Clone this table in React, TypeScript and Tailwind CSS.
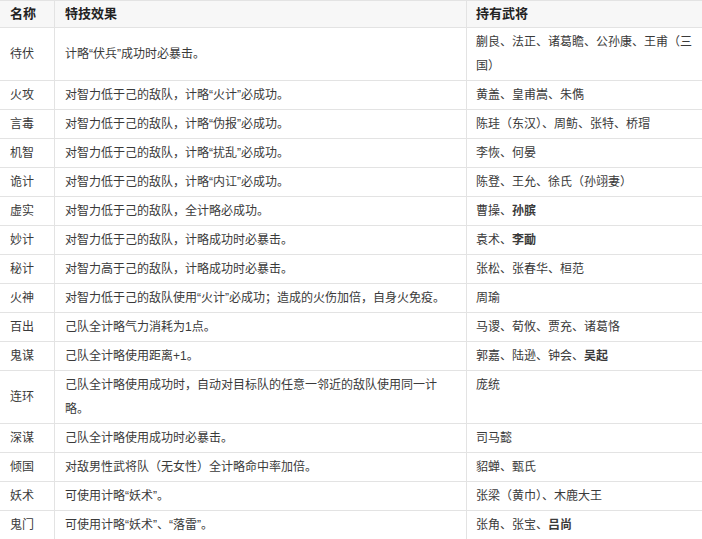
type Row = {
  name: string;
  effect: string;
  holders: React.ReactNode;
};

const B = ({ children }: { children: React.ReactNode }) => (
  <span className="font-bold">{children}</span>
);

const rows: Row[] = [
  { name: "待伏", effect: "计略“伏兵”成功时必暴击。", holders: "蒯良、法正、诸葛瞻、公孙康、王甫（三国）" },
  { name: "火攻", effect: "对智力低于己的敌队，计略“火计”必成功。", holders: "黄盖、皇甫嵩、朱儁" },
  { name: "言毒", effect: "对智力低于己的敌队，计略“伪报”必成功。", holders: "陈珪（东汉）、周鲂、张特、桥瑁" },
  { name: "机智", effect: "对智力低于己的敌队，计略“扰乱”必成功。", holders: "李恢、何晏" },
  { name: "诡计", effect: "对智力低于己的敌队，计略“内讧”必成功。", holders: "陈登、王允、徐氏（孙翊妻）" },
  {
    name: "虚实",
    effect: "对智力低于己的敌队，全计略必成功。",
    holders: (
      <>
        曹操、<B>孙膑</B>
      </>
    ),
  },
  {
    name: "妙计",
    effect: "对智力低于己的敌队，计略成功时必暴击。",
    holders: (
      <>
        袁术、<B>李勔</B>
      </>
    ),
  },
  { name: "秘计", effect: "对智力高于己的敌队，计略成功时必暴击。", holders: "张松、张春华、桓范" },
  { name: "火神", effect: "对智力低于己的敌队使用“火计”必成功；造成的火伤加倍，自身火免疫。", holders: "周瑜" },
  { name: "百出", effect: "己队全计略气力消耗为1点。", holders: "马谡、荀攸、贾充、诸葛恪" },
  {
    name: "鬼谋",
    effect: "己队全计略使用距离+1。",
    holders: (
      <>
        郭嘉、陆逊、钟会、<B>吴起</B>
      </>
    ),
  },
  { name: "连环", effect: "己队全计略使用成功时，自动对目标队的任意一邻近的敌队使用同一计略。", holders: "庞统" },
  { name: "深谋", effect: "己队全计略使用成功时必暴击。", holders: "司马懿" },
  { name: "倾国", effect: "对敌男性武将队（无女性）全计略命中率加倍。", holders: "貂蝉、甄氏" },
  { name: "妖术", effect: "可使用计略“妖术”。", holders: "张梁（黄巾）、木鹿大王" },
  {
    name: "鬼门",
    effect: "可使用计略“妖术”、“落雷”。",
    holders: (
      <>
        张角、张宝、<B>吕尚</B>
      </>
    ),
  },
];

const cell = "border-b border-[#e3e3e3] pt-[2px] pb-[2px] leading-[24px]";

export default function App() {
  return (
    <div
      className="w-[702px] h-[539px] overflow-hidden bg-white text-[12px] text-[#3a3a3a]"
      style={{ fontFamily: '"Liberation Sans", "Noto Sans CJK SC", sans-serif' }}
    >
      <div className="grid grid-cols-[55px_412px_235px]">
        <div className="bg-[#f7f7f7] border-t border-b border-r border-[#e3e3e3] pl-[10px] pt-[1px] pb-[1px] leading-[24px] text-[13px] font-bold text-[#222]">
          名称
        </div>
        <div className="bg-[#f7f7f7] border-t border-b border-r border-[#e3e3e3] pl-[10px] pt-[1px] pb-[1px] leading-[24px] text-[13px] font-bold text-[#222]">
          特技效果
        </div>
        <div className="bg-[#f7f7f7] border-t border-b border-[#e3e3e3] pl-[9px] pt-[1px] pb-[1px] leading-[24px] text-[13px] font-bold text-[#222]">
          持有武将
        </div>

        {rows.map((r) => (
          <div key={r.name} className="contents">
            <div className={`${cell} border-r pl-[10px] flex items-center`}>{r.name}</div>
            <div className={`${cell} border-r pl-[10px] pr-[10px] flex items-center`}>
              <span>{r.effect}</span>
            </div>
            <div className={`${cell} pl-[9px] pr-[8px]`}>{r.holders}</div>
          </div>
        ))}
      </div>
    </div>
  );
}
